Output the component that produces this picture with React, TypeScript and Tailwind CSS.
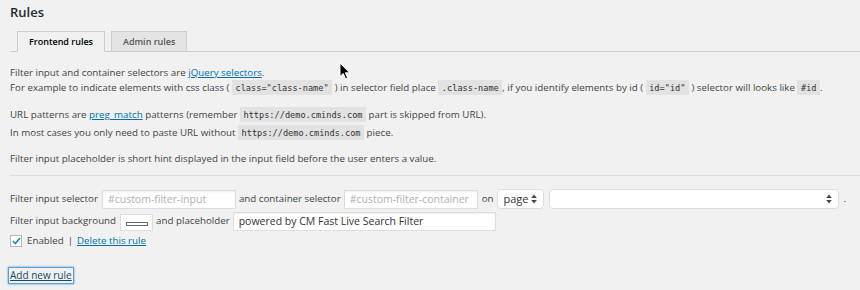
import React from "react";

function Code({ children }: { children: React.ReactNode }) {
  return (
    <code className="bg-[#e2e2e2] px-[3.5px] pt-[3px] pb-[2px] font-['DejaVu_Sans_Mono',monospace] text-[8.6px] text-[#333]">
      {children}
    </code>
  );
}

function Link({ children }: { children: React.ReactNode }) {
  return <a className="text-[#0073aa] underline cursor-pointer">{children}</a>;
}

function UpDown() {
  return (
    <svg width="6" height="10" viewBox="0 0 6 10" className="shrink-0">
      <path d="M3 0.5 L5.8 4 L0.2 4 Z" fill="#444" />
      <path d="M3 9.5 L5.8 6 L0.2 6 Z" fill="#444" />
    </svg>
  );
}

function Cursor() {
  return (
    <svg
      width="12"
      height="18"
      viewBox="0 0 12 18"
      className="absolute left-[339px] top-[62px]"
    >
      <path
        d="M1 1 L1 14.5 L4.2 11.5 L6.5 16.8 L8.6 15.9 L6.4 10.8 L10.6 10.8 Z"
        fill="#000"
        stroke="#fff"
        strokeWidth="1"
        strokeLinejoin="round"
      />
    </svg>
  );
}

export default function App() {
  return (
    <div className="relative w-[860px] h-[290px] overflow-hidden bg-[#f1f1f1] font-['Open_Sans',sans-serif] text-[9.75px] text-[#444]">
      <div className="pl-[10px]">
        <h2 className="pt-[3px] text-[13px] font-semibold leading-[18px] text-[#23282d]">
          Rules
        </h2>

        <div className="mt-[10px] flex items-end gap-[6px] border-b border-[#ccc] pl-[7px] h-[21px]">
          <div className="-mb-px h-[21px] border border-[#ccc] border-b-[#f1f1f1] bg-[#f1f1f1] px-[11px] text-[9px] font-semibold leading-[19px] text-black">
            Frontend rules
          </div>
          <div className="h-[20px] border border-b-0 border-[#ccc] bg-[#e4e4e4] px-[11px] text-[9px] font-semibold leading-[19px] text-[#555]">
            Admin rules
          </div>
        </div>

        <div className="mt-[13px]">
          <div className="leading-[15px]">
            Filter input and container selectors are <Link>jQuery selectors</Link>.
          </div>
          <div className="leading-[17px] mt-[-1px]">
            For example to indicate elements with css class ( <Code>class="class-name"</Code> ) in selector field place <Code>.class-name</Code>, if you identify elements by id ( <Code>id="id"</Code> ) selector will looks like <Code>#id</Code>.
          </div>
        </div>

        <div className="mt-[9px]">
          <div className="leading-[18px]">
            URL patterns are <Link>preg_match</Link> patterns (remember <Code>https://demo.cminds.com</Code> part is skipped from URL).
          </div>
          <div className="leading-[18px]">
            In most cases you only need to paste URL without <Code>https://demo.cminds.com</Code> piece.
          </div>
        </div>

        <div className="mt-[9px] leading-[15px]">
          Filter input placeholder is short hint displayed in the input field before the user enters a value.
        </div>

        <div className="mt-[9px] border-t border-[#dcdcdc]" />

        <div className="mt-[13px] flex items-center h-[20px] whitespace-nowrap">
          <span>Filter input selector</span>
          <div className="ml-[4px] w-[134px] h-[19px] border border-[#ddd] bg-white px-[5px] leading-[17px] text-[10.5px] text-[#b0b0b0] shadow-[inset_0_1px_2px_rgba(0,0,0,0.07)]">
            #custom-filter-input
          </div>
          <span className="ml-[3px]">and container selector</span>
          <div className="ml-[3px] w-[134px] h-[19px] border border-[#ddd] bg-white px-[5px] leading-[17px] text-[10.5px] text-[#b0b0b0] shadow-[inset_0_1px_2px_rgba(0,0,0,0.07)]">
            #custom-filter-container
          </div>
          <span className="ml-[4px]">on</span>
          <div className="ml-[3px] w-[47px] h-[20px] flex items-center justify-between rounded-[4px] border border-[#ddd] bg-white pl-[6px] pr-[6px] text-[11px] text-[#333]">
            page <UpDown />
          </div>
          <div className="ml-[5px] w-[290px] h-[20px] flex items-center justify-end rounded-[4px] border border-[#ddd] bg-white pr-[6px]">
            <UpDown />
          </div>
          <span className="ml-[5px]">.</span>
        </div>

        <div className="mt-[2px] flex items-center h-[20px] whitespace-nowrap">
          <span>Filter input background</span>
          <div className="ml-[4px] w-[33px] h-[17px] flex items-center justify-center border border-[#ddd] bg-white mt-[3px]">
            <div className="w-[22px] h-[4px] border border-[#666] bg-white mt-[2px]" />
          </div>
          <span className="ml-[3px]">and placeholder</span>
          <div className="ml-[3px] w-[263px] h-[19px] border border-[#ddd] bg-white px-[5px] leading-[17px] text-[10.5px] text-[#333] shadow-[inset_0_1px_2px_rgba(0,0,0,0.07)]">
            powered by CM Fast Live Search Filter
          </div>
        </div>

        <div className="mt-[3px] flex items-center h-[14px] whitespace-nowrap">
          <div className="w-[12px] h-[12px] border border-[#b4b9be] bg-white flex items-center justify-center">
            <svg width="9" height="8" viewBox="0 0 9 8">
              <path d="M1 4.2 L3.4 6.6 L8 1" fill="none" stroke="#1e8cbe" strokeWidth="1.7" />
            </svg>
          </div>
          <span className="ml-[5px]">Enabled</span>
          <span className="ml-[4px]">|</span>
          <span className="ml-[4px]">
            <Link>Delete this rule</Link>
          </span>
        </div>

        <div className="mt-[20px] flex">
          <a className="px-px leading-[15px] text-[10px] text-[#124964] underline shadow-[0_0_0_1px_#5b9dd9,0_0_2px_1px_rgba(30,140,190,0.8)] -ml-px">
            Add new rule
          </a>
        </div>
      </div>
      <Cursor />
    </div>
  );
}
